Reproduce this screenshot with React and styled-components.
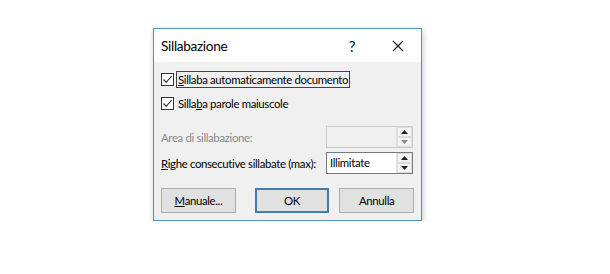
import React from 'react'
import styled, { createGlobalStyle } from 'styled-components'

const Global = createGlobalStyle`
  body {
    margin: 0;
    background: #ffffff;
    font-family: Lato, "Segoe UI", sans-serif;
  }
`

function CheckBox({ label, mnemonic, focused }) {
    return (
        <CheckRow>
            <Box>
                <svg width="11" height="11" viewBox="0 0 11 11">
                    <path d="M1.5 5.5 L4.2 8.3 L9.6 2.2" fill="none" stroke="#222" strokeWidth="1.1" />
                </svg>
            </Box>
            <CheckLabel focused={focused}>
                {label[0]}
                {mnemonic}
                {label[1]}
            </CheckLabel>
        </CheckRow>
    )
}

function Spin({ value, disabled }) {
    return (
        <SpinBox disabled={disabled}>
            <SpinValue>{value}</SpinValue>
            <SpinArrows>
                <Arrow>
                    <svg width="7" height="4" viewBox="0 0 7 4"><path d="M0 4 L3.5 0 L7 4 Z" fill="#222" /></svg>
                </Arrow>
                <Arrow>
                    <svg width="7" height="4" viewBox="0 0 7 4"><path d="M0 0 L3.5 4 L7 0 Z" fill={disabled ? '#888' : '#222'} /></svg>
                </Arrow>
            </SpinArrows>
        </SpinBox>
    )
}

export default function App() {
    return (
        <Page>
            <Global />
            <Dialog>
                <TitleBar>
                    <Title>Sillabazione</Title>
                    <TitleButton>?</TitleButton>
                    <TitleButton>
                        <svg width="12" height="12" viewBox="0 0 12 12">
                            <path d="M1 1 L11 11 M11 1 L1 11" stroke="#111" strokeWidth="1.1" />
                        </svg>
                    </TitleButton>
                </TitleBar>
                <Body>
                    <CheckBox focused label={['', 'illaba automaticamente documento']} mnemonic={<u>S</u>} />
                    <CheckBox label={['Silla', 'a parole maiuscole']} mnemonic={<u>b</u>} />
                    <FieldRow>
                        <FieldLabel disabled>Area di sillabazione:</FieldLabel>
                        <Spin disabled value="" />
                    </FieldRow>
                    <FieldRow tight>
                        <FieldLabel><u>R</u>ighe consecutive sillabate (max):</FieldLabel>
                        <Spin value="Illimitate" />
                    </FieldRow>
                    <Buttons>
                        <Button><u>M</u>anuale...</Button>
                        <Button primary>OK</Button>
                        <Button>Annulla</Button>
                    </Buttons>
                </Body>
            </Dialog>
        </Page>
    )
}

const Page = styled.div`
    padding: 28px 0 0 153px;
`

const Dialog = styled.div`
    width: 267px;
    border: 1px solid #4f93cc;
    background: #f0f0f0;
    box-shadow: 1px 2px 6px rgba(0, 0, 0, 0.22);
`

const TitleBar = styled.div`
    height: 33px;
    background: #ffffff;
    display: flex;
    align-items: center;
    padding-left: 7px;
`

const Title = styled.div`
    flex: 1;
    font-size: 13.6px;
    letter-spacing: -0.3px;
    color: #000;
`

const TitleButton = styled.div`
    width: 46px;
    height: 33px;
    display: flex;
    align-items: center;
    justify-content: center;
    font-size: 15px;
    color: #111;
`

const Body = styled.div`
    padding: 9px 7px 7px 7px;
    font-size: 11.4px;
    letter-spacing: -0.35px;
    color: #000;
`

const CheckRow = styled.div`
    display: flex;
    align-items: center;
    height: 17px;
    margin-bottom: 7px;
`

const Box = styled.div`
    width: 11px;
    height: 11px;
    border: 1px solid #333;
    background: #fff;
    display: flex;
    margin-right: 2px;
`

const CheckLabel = styled.span`
    padding: 0 1px;
    line-height: 15px;
    border: 1px solid ${p => (p.focused ? '#444' : 'transparent')};
`

const FieldRow = styled.div`
    display: flex;
    align-items: center;
    justify-content: space-between;
    width: 252px;
    margin-top: ${p => (p.tight ? '4px' : '14px')};
`

const FieldLabel = styled.span`
    white-space: nowrap;
    color: ${p => (p.disabled ? '#8a8a8a' : '#000')};
`

const SpinBox = styled.div`
    width: 85px;
    height: 20px;
    display: flex;
    border: 1px solid ${p => (p.disabled ? '#cccccc' : '#7a7a7a')};
    background: ${p => (p.disabled ? '#f0f0f0' : '#fff')};
`

const SpinValue = styled.div`
    flex: 1;
    padding-left: 3px;
    line-height: 20px;
`

const SpinArrows = styled.div`
    width: 15px;
    display: flex;
    flex-direction: column;
    border-left: 1px solid #e0e0e0;
`

const Arrow = styled.div`
    flex: 1;
    display: flex;
    align-items: center;
    justify-content: center;
    background: #f4f4f4;
    border: 1px solid #dcdcdc;
`

const Buttons = styled.div`
    display: flex;
    margin-top: 14px;
    gap: 19px;
`

const Button = styled.div`
    width: 73px;
    height: 23px;
    display: flex;
    align-items: center;
    justify-content: center;
    background: #e1e1e1;
    border: 1px solid ${p => (p.primary ? '#3d7fb0' : '#adadad')};
    box-shadow: ${p => (p.primary ? 'inset 0 0 0 1px #3d7fb0' : 'none')};
    &:last-child {
        margin-left: -9px;
    }
`
